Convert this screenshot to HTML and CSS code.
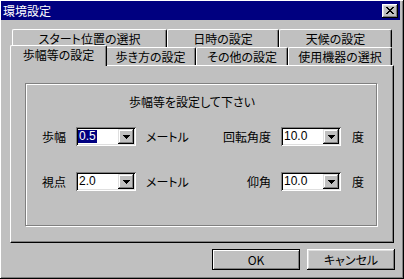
FILE: index.html
```html
<!DOCTYPE html>
<html lang="ja">
<head>
    <meta charset="UTF-8">
    <title>環境設定</title>
    <link rel="stylesheet" href="styles.css">
</head>
<body>
    <div class="window">
        <div class="titlebar">
            <span class="title">環境設定</span>
            <button class="close" type="button">
                <svg width="8" height="7" viewBox="0 0 8 7">
                    <path d="M0 0h2v1h-2z M6 0h2v1h-2z M1 1h2v1h-2z M5 1h2v1h-2z M2 2h4v1h-4z M3 3h2v1h-2z M2 4h4v1h-4z M1 5h2v1h-2z M5 5h2v1h-2z M0 6h2v1h-2z M6 6h2v1h-2z" fill="#000"/>
                </svg>
            </button>
        </div>

        <div class="content">
            <div class="tabs">
                <div class="tab-row">
                    <div class="tab tab-start">スタート位置の選択</div>
                    <div class="tab tab-date">日時の設定</div>
                    <div class="tab tab-weather">天候の設定</div>
                </div>
                <div class="tab-row front">
                    <div class="tab tab-step active">歩幅等の設定</div>
                    <div class="tab tab-walk">歩き方の設定</div>
                    <div class="tab tab-other">その他の設定</div>
                    <div class="tab tab-device">使用機器の選択</div>
                </div>
            </div>

            <div class="panel">
                <div class="group">
                    <div class="heading">歩幅等を設定して下さい</div>

                    <div class="field-row first">
                        <span class="label">歩幅</span>
                        <div class="combo">
                            <span class="combo-value"><span class="selected">0.5</span></span>
                            <span class="combo-button">
                                <svg width="7" height="4" viewBox="0 0 7 4"><path d="M0 0h7v1h-7z M1 1h5v1h-5z M2 2h3v1h-3z M3 3h1v1h-1z" fill="#000"/></svg>
                            </span>
                        </div>
                        <span class="unit">メートル</span>
                        <span class="label label-wide">回転角度</span>
                        <div class="combo">
                            <span class="combo-value">10.0</span>
                            <span class="combo-button">
                                <svg width="7" height="4" viewBox="0 0 7 4"><path d="M0 0h7v1h-7z M1 1h5v1h-5z M2 2h3v1h-3z M3 3h1v1h-1z" fill="#000"/></svg>
                            </span>
                        </div>
                        <span class="unit unit-short">度</span>
                    </div>

                    <div class="field-row second">
                        <span class="label">視点</span>
                        <div class="combo">
                            <span class="combo-value">2.0</span>
                            <span class="combo-button">
                                <svg width="7" height="4" viewBox="0 0 7 4"><path d="M0 0h7v1h-7z M1 1h5v1h-5z M2 2h3v1h-3z M3 3h1v1h-1z" fill="#000"/></svg>
                            </span>
                        </div>
                        <span class="unit">メートル</span>
                        <span class="label label-wide">仰角</span>
                        <div class="combo">
                            <span class="combo-value">10.0</span>
                            <span class="combo-button">
                                <svg width="7" height="4" viewBox="0 0 7 4"><path d="M0 0h7v1h-7z M1 1h5v1h-5z M2 2h3v1h-3z M3 3h1v1h-1z" fill="#000"/></svg>
                            </span>
                        </div>
                        <span class="unit unit-short">度</span>
                    </div>
                </div>
            </div>

            <div class="actions">
                <button class="btn default" type="button">OK</button>
                <button class="btn" type="button">キャンセル</button>
            </div>
        </div>
    </div>
</body>
</html>
```

FILE: styles.css
```css
body {
    margin: 0;
    background-color: #c0c0c0;
    font-family: "Noto Sans CJK JP", "Liberation Sans", sans-serif;
    font-size: 12px;
    font-feature-settings: "palt";
    color: #000;
}

.window {
    width: 404px;
    height: 279px;
    box-sizing: border-box;
    padding: 1px 4px 2px 1px;
    background-color: #c0c0c0;
    box-shadow: inset -1px -1px #000, inset 1px 1px #fff, inset -2px -2px #808080;
}

/* title bar */
.titlebar {
    height: 19px;
    display: flex;
    align-items: center;
    justify-content: space-between;
    padding: 0 2px;
    background-color: #000080;
    color: #fff;
}

.title {
    line-height: 14px;
}

.close {
    width: 16px;
    height: 14px;
    padding: 0;
    border: none;
    display: flex;
    align-items: center;
    justify-content: center;
    background-color: #c0c0c0;
    box-shadow: inset -1px -1px #000, inset 1px 1px #fff, inset -2px -2px #808080, inset 2px 2px #dfdfdf;
}

.close svg {
    display: block;
}

.content {
    padding: 9px 0 0 9px;
}

/* tabs */
.tabs {
    width: 384px;
    box-sizing: border-box;
    padding: 0 2px;
}

.tab-row {
    display: flex;
    align-items: flex-start;
    height: 18px;
}

.tab {
    box-sizing: border-box;
    height: 18px;
    padding-top: 2px;
    line-height: 14px;
    text-align: center;
    white-space: nowrap;
    background-color: #c0c0c0;
    border-top: 1px solid #fff;
    border-left: 1px solid #fff;
    border-right: 1px solid #000;
    border-radius: 2px 2px 0 0;
    box-shadow: inset -1px 0 #808080;
}

.tab-start { width: 155px; }
.tab-date { width: 112px; }
.tab-weather { width: 113px; }
.tab-step { width: 93px; }
.tab-walk { width: 91px; }
.tab-other { width: 92px; }
.tab-device { width: 104px; }

.tab.active {
    position: relative;
    z-index: 1;
    width: 97px;
    height: 21px;
    margin: -2px -2px -1px;
}

/* panel */
.panel {
    width: 384px;
    height: 178px;
    box-sizing: border-box;
    padding: 17px 14px 0;
    border-top: 1px solid #fff;
    border-left: 1px solid #fff;
    border-right: 1px solid #000;
    border-bottom: 1px solid #000;
    box-shadow: inset -1px -1px #808080;
}

.group {
    width: 352px;
    height: 143px;
    box-sizing: border-box;
    border: 1px solid #808080;
    box-shadow: inset 1px 1px #fff, 1px 1px #fff;
}

.heading {
    margin-top: 11px;
    padding-left: 103px;
    line-height: 14px;
}

.field-row {
    display: flex;
    align-items: center;
    height: 19px;
}

.field-row.first {
    margin-top: 18px;
}

.field-row.second {
    margin-top: 26px;
}

.label {
    width: 40px;
    text-align: right;
    line-height: 14px;
}

.label-wide {
    width: 65px;
}

.unit {
    width: 60px;
    margin-left: 10px;
    line-height: 14px;
}

.unit-short {
    width: auto;
    margin-left: 11px;
}

/* combo box */
.combo {
    width: 60px;
    height: 19px;
    margin-left: 10px;
    box-sizing: border-box;
    padding: 2px;
    display: flex;
    background-color: #fff;
    box-shadow: inset 1px 1px #808080, inset -1px -1px #fff, inset 2px 2px #000, inset -2px -2px #dfdfdf;
}

.combo-value {
    flex: 1;
    display: flex;
    align-items: center;
    padding-left: 1px;
    font-family: "Liberation Sans", sans-serif;
    font-size: 12px;
    line-height: 13px;
}

.selected {
    margin-left: -1px;
    padding: 0 1px;
    background-color: #000080;
    color: #fff;
}

.combo-button {
    width: 16px;
    display: flex;
    align-items: center;
    justify-content: center;
    background-color: #c0c0c0;
    box-shadow: inset -1px -1px #000, inset 1px 1px #dfdfdf, inset -2px -2px #808080, inset 2px 2px #fff;
}

.combo-button svg {
    display: block;
}

/* buttons */
.actions {
    width: 385px;
    margin-top: 6px;
    display: flex;
    justify-content: flex-end;
    gap: 7px;
}

.btn {
    width: 88px;
    height: 21px;
    padding: 0;
    border: none;
    font-family: "Noto Sans CJK JP", "Liberation Sans", sans-serif;
    font-size: 12px;
    font-feature-settings: "palt";
    color: #000;
    background-color: #c0c0c0;
    box-shadow: inset -1px -1px #000, inset 1px 1px #fff, inset -2px -2px #808080, inset 2px 2px #dfdfdf;
}

.btn.default {
    border: 1px solid #000;
    box-shadow: inset 1px 1px #fff, inset -1px -1px #808080;
}
```
